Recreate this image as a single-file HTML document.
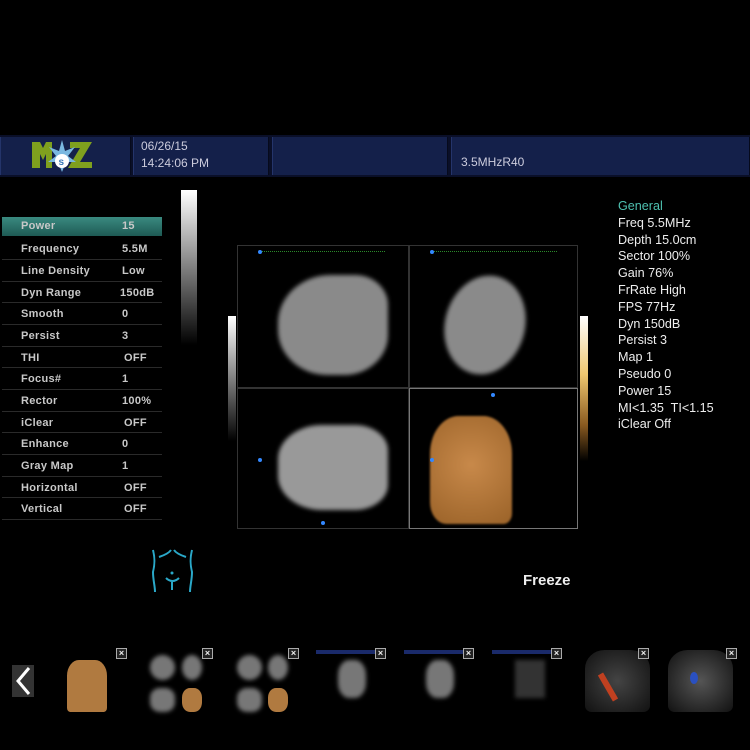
<!DOCTYPE html>
<html><head><meta charset="utf-8"><style>
*{margin:0;padding:0;box-sizing:border-box}
body{width:750px;height:750px;background:#000;position:relative;overflow:hidden;font-family:"Liberation Sans",sans-serif;color:#ddd}
.a{position:absolute}
.hdr{top:135px;left:0;width:750px;height:42px;background:#0a0f28}
.cell{position:absolute;top:2px;height:38px;background:#14204a;border-left:1px solid #24346a;border-right:1px solid #060a1c}
.menu .row{position:absolute;left:2px;width:160px;height:21.6px;border-bottom:1px solid #2a2a2a;font-size:11px;font-weight:bold;color:#c8c8c8;letter-spacing:.3px}
.menu .row span{position:absolute;top:5px}
.r{font-size:12.6px;color:#eee;left:618px;line-height:16.8px}
.q{border:1px solid #333}
.x{position:absolute;width:11px;height:11px;border:1px solid #aaa;background:#222;color:#eee;font-size:9px;line-height:9px;text-align:center;font-weight:bold}
.blob{position:absolute;background:#8a8a8a;filter:blur(2px)}
</style></head><body>
<div class="a hdr">
 <div class="cell" style="left:0;width:131px"></div>
 <div class="cell" style="left:133px;width:136px"></div>
 <div class="cell" style="left:272px;width:176px"></div>
 <div class="cell" style="left:451px;width:299px"></div>
</div>
<svg class="a" style="left:30px;top:138px" width="65" height="36" viewBox="0 0 65 36">
 <path d="M2 4h8l3 6 3-6h6v26h-6V16l-3 6-3-6v14H2z" fill="#7fa01e"/>
 <path d="M40 4h22l-12 20h12v6H38l12-20H40z" fill="#7fa01e"/>
 <polygon points="32,2 35,13 45,9 38,18 46,24 36,24 32,34 28,24 18,24 26,18 19,9 29,13" fill="#7ab8e0"/>
 <circle cx="32" cy="23" r="7" fill="#fff"/><text x="28.5" y="27" font-size="10" font-weight="bold" fill="#3a7ab8" font-family="Liberation Sans">s</text>
</svg>
<div class="a" style="left:141px;top:138px;font-size:12px;color:#ccd;line-height:17px">06/26/15<br>14:24:06 PM</div>
<div class="a" style="left:461px;top:155px;font-size:12px;color:#ccd">3.5MHzR40</div>

<div class="a" style="left:181px;top:190px;width:16px;height:155px;background:linear-gradient(#fff,#000)"></div>
<div class="a" style="left:228px;top:316px;width:8px;height:125px;background:linear-gradient(#fff,#000)"></div>
<div class="a" style="left:580px;top:316px;width:8px;height:145px;background:linear-gradient(#fff,#f0c870 40%,#8a5a20 75%,#000)"></div>

<div class="menu">
 <div class="a" style="left:2px;top:217px;width:160px;height:19px;background:linear-gradient(#3a8a80,#1e5a54)"></div>
 <div class="row" style="top:215px;border:none"><span style="left:19px">Power</span><span style="left:120px">15</span></div>
 <div class="row" style="top:238px"><span style="left:19px">Frequency</span><span style="left:120px">5.5M</span></div>
 <div class="row" style="top:260px"><span style="left:19px">Line Density</span><span style="left:120px">Low</span></div>
 <div class="row" style="top:281.5px"><span style="left:19px">Dyn Range</span><span style="left:118px">150dB</span></div>
 <div class="row" style="top:303px"><span style="left:19px">Smooth</span><span style="left:120px">0</span></div>
 <div class="row" style="top:325px"><span style="left:19px">Persist</span><span style="left:120px">3</span></div>
 <div class="row" style="top:346.5px"><span style="left:19px">THI</span><span style="left:122px">OFF</span></div>
 <div class="row" style="top:368px"><span style="left:19px">Focus#</span><span style="left:120px">1</span></div>
 <div class="row" style="top:390px"><span style="left:19px">Rector</span><span style="left:120px">100%</span></div>
 <div class="row" style="top:411.5px"><span style="left:19px">iClear</span><span style="left:122px">OFF</span></div>
 <div class="row" style="top:433px"><span style="left:19px">Enhance</span><span style="left:120px">0</span></div>
 <div class="row" style="top:455px"><span style="left:19px">Gray Map</span><span style="left:120px">1</span></div>
 <div class="row" style="top:476.5px"><span style="left:19px">Horizontal</span><span style="left:122px">OFF</span></div>
 <div class="row" style="top:498px"><span style="left:19px">Vertical</span><span style="left:122px">OFF</span></div>
</div>

<div class="a q" style="left:237px;top:245px;width:172px;height:143px"></div>
<div class="a q" style="left:409px;top:245px;width:169px;height:143px"></div>
<div class="a q" style="left:237px;top:388px;width:172px;height:141px"></div>
<div class="a q" style="left:409px;top:388px;width:169px;height:141px;border-color:#777"></div>
<div class="a" style="left:260px;top:251px;width:125px;height:1px;border-top:1px dotted #2a8a2a"></div>
<div class="a" style="left:432px;top:251px;width:125px;height:1px;border-top:1px dotted #2a8a2a"></div>
<div class="blob" style="left:278px;top:275px;width:110px;height:100px;border-radius:48% 30% 40% 45%"></div>
<div class="blob" style="left:445px;top:275px;width:80px;height:100px;border-radius:50%;transform:rotate(15deg)"></div>
<div class="blob" style="left:278px;top:425px;width:110px;height:85px;border-radius:40% 30% 30% 40%;background:#999"></div>
<div class="a" style="left:430px;top:416px;width:82px;height:108px;border-radius:35% 35% 10% 20%;background:radial-gradient(circle at 50% 45%,#c8894a,#9a6228);filter:blur(1px)"></div>
<div class="a" style="left:258px;top:250px;width:4px;height:4px;background:#38f;border-radius:50%"></div>
<div class="a" style="left:430px;top:250px;width:4px;height:4px;background:#38f;border-radius:50%"></div>
<div class="a" style="left:491px;top:393px;width:4px;height:4px;background:#38f;border-radius:50%"></div>
<div class="a" style="left:258px;top:458px;width:4px;height:4px;background:#38f;border-radius:50%"></div>
<div class="a" style="left:321px;top:521px;width:4px;height:4px;background:#38f;border-radius:50%"></div>
<div class="a" style="left:430px;top:458px;width:4px;height:4px;background:#38f;border-radius:50%"></div>

<div class="a r" style="top:198px"><span style="color:#4ec0b0">General</span><br>Freq 5.5MHz<br>Depth 15.0cm<br>Sector 100%<br>Gain 76%<br>FrRate High<br>FPS 77Hz<br>Dyn 150dB<br>Persist 3<br>Map 1<br>Pseudo 0<br>Power 15<br>MI&lt;1.35&nbsp; TI&lt;1.15<br>iClear Off</div>

<svg class="a" style="left:145px;top:545px" width="55" height="50" viewBox="0 0 55 50">
 <g stroke="#2aa8c8" stroke-width="2" fill="none">
 <path d="M8 5c2 8 2 14 0 22 0 8 2 14 2 20"/><path d="M47 5c-2 8-2 14 0 22 0 8-2 14-2 20"/>
 <path d="M14 12c6-2 10-4 12-7"/><path d="M41 12c-6-2-10-4-12-7"/>
 <path d="M21 33c4 4 9 4 13 0M27 37v8"/></g>
 <circle cx="27" cy="28" r="1.5" fill="#2aa8c8"/>
</svg>
<div class="a" style="left:523px;top:572px;font-size:15px;font-weight:bold;color:#eee">Freeze</div>

<svg class="a" style="left:12px;top:665px" width="22" height="32"><rect width="22" height="32" fill="#333"/><path d="M17 3L6 16l11 13" stroke="#fff" stroke-width="3" fill="none"/></svg>
<div class="a" style="left:67px;top:660px;width:40px;height:52px;background:#b07a40;border-radius:30% 30% 8% 8%"></div>
<div class="a" style="left:150px;top:655px;width:25px;height:25px;background:#777;border-radius:50%;filter:blur(2px)"></div>
<div class="a" style="left:182px;top:655px;width:20px;height:25px;background:#777;border-radius:50%;filter:blur(2px)"></div>
<div class="a" style="left:150px;top:688px;width:25px;height:24px;background:#777;border-radius:40%;filter:blur(2px)"></div>
<div class="a" style="left:182px;top:688px;width:20px;height:24px;background:#b07a40;border-radius:40%"></div>
<div class="a" style="left:237px;top:655px;width:25px;height:25px;background:#777;border-radius:50%;filter:blur(2px)"></div>
<div class="a" style="left:268px;top:655px;width:20px;height:25px;background:#777;border-radius:50%;filter:blur(2px)"></div>
<div class="a" style="left:237px;top:688px;width:25px;height:24px;background:#777;border-radius:40%;filter:blur(2px)"></div>
<div class="a" style="left:268px;top:688px;width:20px;height:24px;background:#b07a40;border-radius:40%"></div>
<div class="a" style="left:316px;top:650px;width:65px;height:4px;background:#1a2a6a"></div>
<div class="a" style="left:338px;top:660px;width:28px;height:38px;background:#777;border-radius:40%;filter:blur(2px)"></div>
<div class="a" style="left:404px;top:650px;width:65px;height:4px;background:#1a2a6a"></div>
<div class="a" style="left:426px;top:660px;width:28px;height:38px;background:#777;border-radius:40%;filter:blur(2px)"></div>
<div class="a" style="left:492px;top:650px;width:65px;height:4px;background:#1a2a6a"></div>
<div class="a" style="left:515px;top:660px;width:30px;height:38px;background:#333;filter:blur(2px)"></div>
<div class="a" style="left:585px;top:650px;width:65px;height:62px;background:radial-gradient(#444,#111);border-radius:30% 30% 10% 10%"></div>
<div class="a" style="left:605px;top:672px;width:6px;height:30px;background:#c04020;transform:rotate(-30deg)"></div>
<div class="a" style="left:668px;top:650px;width:65px;height:62px;background:radial-gradient(#555,#111);border-radius:30% 30% 10% 10%"></div>
<div class="a" style="left:690px;top:672px;width:8px;height:12px;background:#2a50c0;border-radius:50%"></div>
<div class="x" style="left:116px;top:648px">×</div>
<div class="x" style="left:202px;top:648px">×</div>
<div class="x" style="left:288px;top:648px">×</div>
<div class="x" style="left:375px;top:648px">×</div>
<div class="x" style="left:463px;top:648px">×</div>
<div class="x" style="left:551px;top:648px">×</div>
<div class="x" style="left:638px;top:648px">×</div>
<div class="x" style="left:726px;top:648px">×</div>
</body></html>
